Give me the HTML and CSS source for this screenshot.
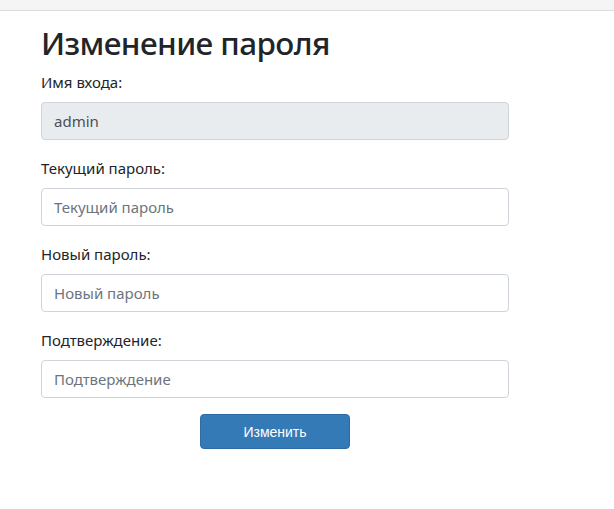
FILE: index.html
```html
<!DOCTYPE html>
<html lang="ru">

<head>
    <meta charset="UTF-8">
    <meta name="viewport" content="width=device-width, initial-scale=1.0">
    <title>Изменение пароля</title>
    <link rel="stylesheet" href="styles.css">
</head>

<body>
    <div class="top_bar"></div>
    <div class="page">
        <h2 class="head">Изменение пароля</h2>
        <form class="pass_form">
            <div class="form-group">
                <label for="login" class="all_label">Имя входа:</label>
                <input type="text" class="form-control" id="login" value="admin" disabled />
            </div>
            <div class="form-group">
                <label for="cur_pwd" class="all_label">Текущий пароль:</label>
                <input type="password" class="form-control" id="cur_pwd" placeholder="Текущий пароль" />
            </div>
            <div class="form-group">
                <label for="new_pwd" class="all_label">Новый пароль:</label>
                <input type="password" class="form-control" id="new_pwd" placeholder="Новый пароль" />
            </div>
            <div class="form-group">
                <label for="c_pwd" class="all_label">Подтверждение:</label>
                <input type="password" class="form-control" id="c_pwd" placeholder="Подтверждение" />
            </div>
            <div class="submit">
                <button type="submit" class="submit_btn">Изменить</button>
            </div>
        </form>
    </div>
</body>

</html>
```

FILE: styles.css
```css
body {
    margin: 0;
    padding: 0;
    background-color: #fff;
    font-family: "Noto Sans", "Open Sans", sans-serif;
    color: #212529;
}

.top_bar {
    height: 10px;
    background-color: #f5f5f5;
    border-bottom: 1px solid #dcdcdc;
}

.page {
    padding-left: 41px;
    width: 468px;
}

.head {
    margin: 13px 0 8px 0;
    font-size: 31.5px;
    font-weight: 500;
    letter-spacing: -0.6px;
    line-height: 38px;
}

.pass_form {
    display: flex;
    flex-direction: column;
}

.form-group {
    display: flex;
    flex-direction: column;
    margin-bottom: 16px;
}

.all_label {
    font-size: 15px;
    line-height: 24px;
    margin-bottom: 8px;
}

.form-control {
    box-sizing: border-box;
    height: 38px;
    width: 100%;
    padding: 6px 12px;
    font-family: inherit;
    font-size: 15px;
    color: #495057;
    background-color: #fff;
    border: 1px solid #ced4da;
    border-radius: 4px;
}

.form-control:disabled {
    background-color: #e9ecef;
}

.form-control::placeholder {
    color: #6c757d;
}

.submit {
    display: flex;
    justify-content: center;
}

.submit_btn {
    width: 150px;
    height: 35px;
    font-family: "Liberation Sans", Arial, sans-serif;
    font-size: 14px;
    color: #fff;
    background-color: #337ab7;
    border: 1px solid #2e6da4;
    border-radius: 4px;
}
```
